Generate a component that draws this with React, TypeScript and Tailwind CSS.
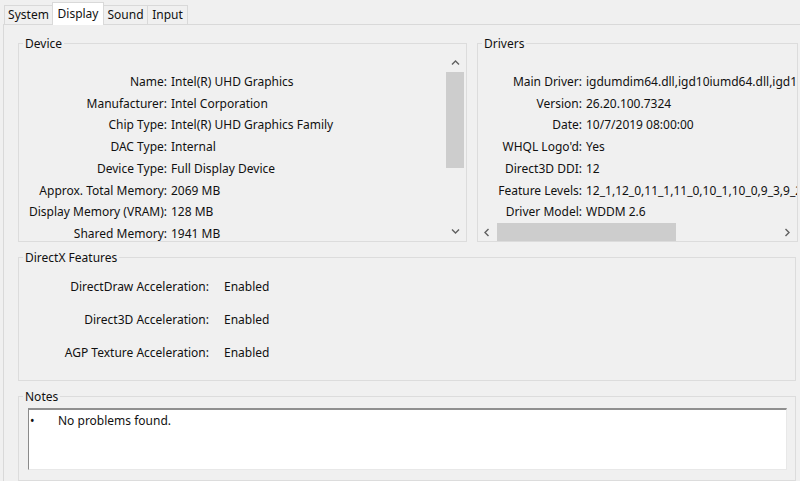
import React from "react";

const device: [string, string][] = [
  ["Name:", "Intel(R) UHD Graphics"],
  ["Manufacturer:", "Intel Corporation"],
  ["Chip Type:", "Intel(R) UHD Graphics Family"],
  ["DAC Type:", "Internal"],
  ["Device Type:", "Full Display Device"],
  ["Approx. Total Memory:", "2069 MB"],
  ["Display Memory (VRAM):", "128 MB"],
  ["Shared Memory:", "1941 MB"],
];

const drivers: [string, string][] = [
  ["Main Driver:", "igdumdim64.dll,igd10iumd64.dll,igd10iumd64.dll,igd12umd64.dll"],
  ["Version:", "26.20.100.7324"],
  ["Date:", "10/7/2019 08:00:00"],
  ["WHQL Logo'd:", "Yes"],
  ["Direct3D DDI:", "12"],
  ["Feature Levels:", "12_1,12_0,11_1,11_0,10_1,10_0,9_3,9_2,9_1"],
  ["Driver Model:", "WDDM 2.6"],
];

const features: [string, string][] = [
  ["DirectDraw Acceleration:", "Enabled"],
  ["Direct3D Acceleration:", "Enabled"],
  ["AGP Texture Acceleration:", "Enabled"],
];

function Chevron({ dir }: { dir: "up" | "down" | "left" | "right" }) {
  const paths = {
    up: "M1 5.5 L4.5 2 L8 5.5",
    down: "M1 2.5 L4.5 6 L8 2.5",
    left: "M5.5 1 L2 4.5 L5.5 8",
    right: "M2.5 1 L6 4.5 L2.5 8",
  };
  return (
    <svg width="9" height="9" viewBox="0 0 9 9" fill="none">
      <path d={paths[dir]} stroke="#606060" strokeWidth="1.4" />
    </svg>
  );
}

function Tab({ label, width, active }: { label: string; width: string; active?: boolean }) {
  return (
    <div
      className={`${width} -ml-px border border-b-0 border-[#d9d9d9] text-center ${
        active ? "relative z-10 mb-[-1px] h-[23px] bg-white leading-[22px]" : "h-[19px] bg-[#f0f0f0] leading-[18px]"
      }`}
    >
      {label}
    </div>
  );
}

export default function App() {
  return (
    <div className="h-[481px] w-[800px] overflow-hidden bg-[#f0f0f0] font-['Noto_Sans',sans-serif] text-[12px] text-[#111]">
      {/* Tab strip */}
      <div className="flex h-[24px] items-end pl-[5px]">
        <Tab label="System" width="w-[49px]" />
        <Tab label="Display" width="w-[52px]" active />
        <Tab label="Sound" width="w-[45px]" />
        <Tab label="Input" width="w-[41px]" />
      </div>

      {/* Tab pane */}
      <div className="ml-[3px] h-[457px] border-l border-t border-[#d9d9d9] pl-[14px] pt-[10px]">
        <div className="flex gap-[10px]">
          {/* Device */}
          <fieldset className="w-[449px] border border-[#dcdcdc]">
            <legend className="ml-[4px] px-[2px] leading-[17px]">Device</legend>
            <div className="flex h-[189px] pr-[2px]">
              <div className="flex-1 overflow-hidden pt-[19px]">
                {device.map(([k, v]) => (
                  <div key={k} className="flex whitespace-nowrap leading-[21.7px]">
                    <span className="w-[148px] text-right">{k}</span>
                    <span className="pl-[4px]">{v}</span>
                  </div>
                ))}
              </div>
              <div className="flex w-[18px] flex-col bg-[#f0f0f0]">
                <div className="flex h-[20px] items-center justify-center pt-[2px]">
                  <Chevron dir="up" />
                </div>
                <div className="h-[96px] bg-[#cdcdcd]" />
                <div className="flex-1" />
                <div className="flex h-[20px] items-center justify-center">
                  <Chevron dir="down" />
                </div>
              </div>
            </div>
          </fieldset>

          {/* Drivers */}
          <fieldset className="w-[321px] min-w-0 border border-[#dcdcdc]">
            <legend className="ml-[4px] px-[2px] leading-[17px]">Drivers</legend>
            <div className="flex h-[189px] flex-col">
              <div className="flex-1 overflow-hidden pt-[19px]">
                {drivers.map(([k, v]) => (
                  <div key={k} className="flex whitespace-nowrap leading-[21.7px]">
                    <span className="w-[104px] shrink-0 text-right">{k}</span>
                    <span className="pl-[4px]">{v}</span>
                  </div>
                ))}
              </div>
              <div className="flex h-[18px] items-center">
                <div className="flex w-[19px] justify-center">
                  <Chevron dir="left" />
                </div>
                <div className="h-[18px] w-[179px] bg-[#cdcdcd]" />
                <div className="flex-1" />
                <div className="flex w-[19px] justify-center">
                  <Chevron dir="right" />
                </div>
              </div>
            </div>
          </fieldset>
        </div>

        {/* DirectX Features */}
        <fieldset className="mt-[7px] w-[778px] border border-[#dcdcdc]">
          <legend className="ml-[4px] px-[2px] leading-[17px]">DirectX Features</legend>
          <div className="h-[114px] pt-[4px]">
            {features.map(([k, v]) => (
              <div key={k} className="flex h-[33px] items-center whitespace-nowrap">
                <span className="w-[190px] text-right">{k}</span>
                <span className="pl-[15px]">{v}</span>
              </div>
            ))}
          </div>
        </fieldset>

        {/* Notes */}
        <fieldset className="mt-[7px] w-[778px] border border-[#dcdcdc] pb-[10px]">
          <legend className="ml-[4px] px-[2px] leading-[17px]">Notes</legend>
          <div className="ml-[9px] mt-[3px] h-[62px] w-[759px] border-b border-l border-r border-t-2 border-b-[#e8e8e8] border-l-[#8a8a8a] border-r-[#e8e8e8] border-t-[#8f8f8f] bg-white pt-[2px]">
            <div className="flex leading-[18px]">
              <span className="w-[29px] pl-[1px]">•</span>
              <span>No problems found.</span>
            </div>
          </div>
        </fieldset>
      </div>
    </div>
  );
}
